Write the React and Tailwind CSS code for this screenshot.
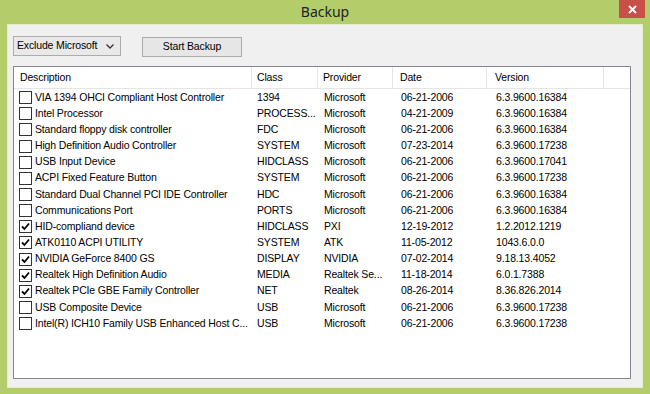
import React from 'react';

const drivers = [
  { desc: 'VIA 1394 OHCI Compliant Host Controller', cls: '1394', provider: 'Microsoft', date: '06-21-2006', version: '6.3.9600.16384', checked: false },
  { desc: 'Intel Processor', cls: 'PROCESS...', provider: 'Microsoft', date: '04-21-2009', version: '6.3.9600.16384', checked: false },
  { desc: 'Standard floppy disk controller', cls: 'FDC', provider: 'Microsoft', date: '06-21-2006', version: '6.3.9600.16384', checked: false },
  { desc: 'High Definition Audio Controller', cls: 'SYSTEM', provider: 'Microsoft', date: '07-23-2014', version: '6.3.9600.17238', checked: false },
  { desc: 'USB Input Device', cls: 'HIDCLASS', provider: 'Microsoft', date: '06-21-2006', version: '6.3.9600.17041', checked: false },
  { desc: 'ACPI Fixed Feature Button', cls: 'SYSTEM', provider: 'Microsoft', date: '06-21-2006', version: '6.3.9600.17238', checked: false },
  { desc: 'Standard Dual Channel PCI IDE Controller', cls: 'HDC', provider: 'Microsoft', date: '06-21-2006', version: '6.3.9600.16384', checked: false },
  { desc: 'Communications Port', cls: 'PORTS', provider: 'Microsoft', date: '06-21-2006', version: '6.3.9600.16384', checked: false },
  { desc: 'HID-compliand device', cls: 'HIDCLASS', provider: 'PXI', date: '12-19-2012', version: '1.2.2012.1219', checked: true },
  { desc: 'ATK0110 ACPI UTILITY', cls: 'SYSTEM', provider: 'ATK', date: '11-05-2012', version: '1043.6.0.0', checked: true },
  { desc: 'NVIDIA GeForce 8400 GS', cls: 'DISPLAY', provider: 'NVIDIA', date: '07-02-2014', version: '9.18.13.4052', checked: true },
  { desc: 'Realtek High Definition Audio', cls: 'MEDIA', provider: 'Realtek Se...', date: '11-18-2014', version: '6.0.1.7388', checked: true },
  { desc: 'Realtek PCIe GBE Family Controller', cls: 'NET', provider: 'Realtek', date: '08-26-2014', version: '8.36.826.2014', checked: true },
  { desc: 'USB Composite Device', cls: 'USB', provider: 'Microsoft', date: '06-21-2006', version: '6.3.9600.17238', checked: false },
  { desc: 'Intel(R) ICH10 Family USB Enhanced Host C...', cls: 'USB', provider: 'Microsoft', date: '06-21-2006', version: '6.3.9600.17238', checked: false },
];

const cols = 'grid grid-cols-[238px_66px_75px_94px_117px_1fr]';

const Checkbox = ({ checked }) => (
  <span className="w-[13px] h-[13px] border border-[#333333] bg-white flex items-center justify-center shrink-0">
    {checked && (
      <svg width="9" height="9" viewBox="0 0 9 9">
        <path d="M1 4.5 L3.5 7 L8 1.5" fill="none" stroke="#000" strokeWidth="1.8" />
      </svg>
    )}
  </span>
);

const App = () => {
  return (
    <div className="w-[650px] h-[394px] bg-[#b2cd6a] flex flex-col font-['Liberation_Sans',Arial,sans-serif] text-[10.5px] tracking-[-0.15px] text-black">
      <div className="h-[24px] relative flex items-center justify-center shrink-0">
        <span className="font-['Noto_Sans',sans-serif] text-[14px] tracking-normal text-[#222] leading-none">Backup</span>
        <div className="absolute right-[5px] top-0 w-[26px] h-[18px] bg-[#c7504b] flex items-center justify-center">
          <svg width="9" height="9" viewBox="0 0 9 9">
            <path d="M1 1 L8 8 M8 1 L1 8" stroke="#fff" strokeWidth="1.8" />
          </svg>
        </div>
      </div>

      <div className="flex-1 mx-[7px] mb-[6px] bg-[#f0f0f0] border border-[#e4edc9] flex flex-col pl-[5px] pr-[11px] pb-[8px]">
        <div className="flex gap-[21px] pt-[11px] h-[41px] items-start">
          <div className="w-[108px] h-[20px] border border-[#acacac] bg-[#e9e9e9] flex items-center justify-between pl-[3px] pr-[6px]">
            <span>Exclude Microsoft</span>
            <svg width="8" height="5" viewBox="0 0 8 5">
              <path d="M0.5 0.5 L4 4 L7.5 0.5" fill="none" stroke="#333" strokeWidth="1.3" />
            </svg>
          </div>
          <div className="w-[100px] h-[20px] mt-[1px] border border-[#acacac] bg-[#e6e6e6] flex items-center justify-center">
            Start Backup
          </div>
        </div>

        <div className="flex-1 border border-[#828790] bg-white flex flex-col">
          <div className={`${cols} h-[22px] border-b border-[#e5e5e5] shrink-0`}>
            <div className="pl-[6px] border-r border-[#e5e5e5] flex items-center">Description</div>
            <div className="pl-[5px] border-r border-[#e5e5e5] flex items-center">Class</div>
            <div className="pl-[5px] border-r border-[#e5e5e5] flex items-center">Provider</div>
            <div className="pl-[7px] border-r border-[#e5e5e5] flex items-center">Date</div>
            <div className="pl-[8px] border-r border-[#e5e5e5] flex items-center">Version</div>
            <div />
          </div>
          <div className="pt-[0.6px]">
            {drivers.map((d) => (
              <div key={d.desc} className={`${cols} h-[16.15px] items-center`}>
                <div className="pl-[5px] flex items-center gap-[3px] whitespace-nowrap overflow-hidden">
                  <Checkbox checked={d.checked} />
                  <span>{d.desc}</span>
                </div>
                <div className="pl-[5px] whitespace-nowrap overflow-hidden">{d.cls}</div>
                <div className="pl-[6px] whitespace-nowrap overflow-hidden">{d.provider}</div>
                <div className="pl-[8px] whitespace-nowrap">{d.date}</div>
                <div className="pl-[9px] whitespace-nowrap">{d.version}</div>
                <div />
              </div>
            ))}
          </div>
        </div>
      </div>
    </div>
  );
};

export default App;
